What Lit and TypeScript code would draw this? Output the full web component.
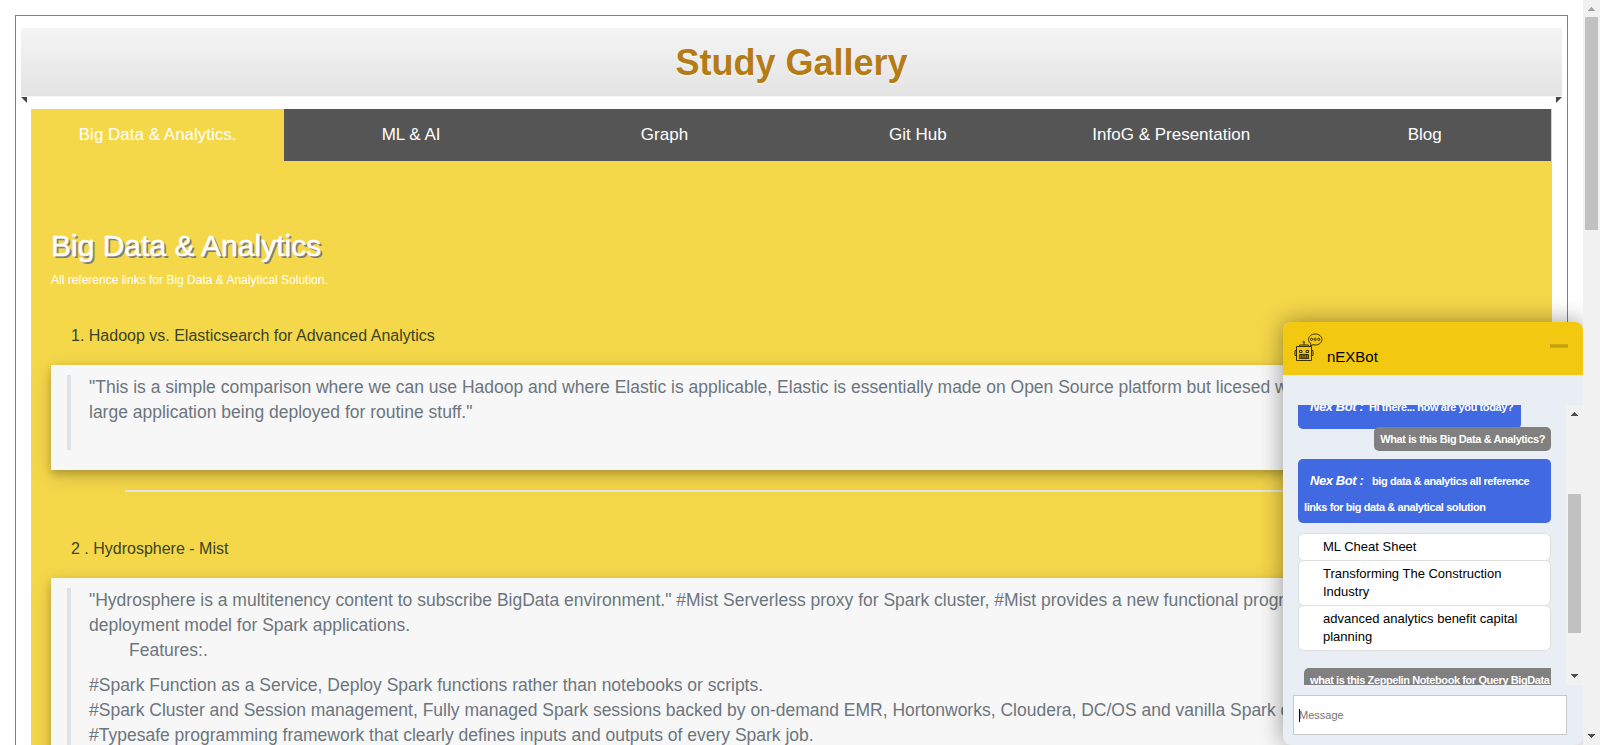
import { LitElement, html, css, svg } from "lit";
import { customElement, property } from "lit/decorators.js";
import { classMap } from "lit/directives/class-map.js";

@customElement("scroll-rail")
class ScrollRail extends LitElement {
  @property({ type: Number }) before = 0;
  @property({ type: Number }) thumb = 100;
  @property({ type: Boolean }) top = false;

  static styles = css`
    :host { display: flex; flex-direction: column; align-items: center; width: 17px; background: #f1f1f1; flex: none; }
    .arrow { height: 17px; width: 17px; display: block; flex: none; }
    .track { flex: 1; width: 13px; min-height: 0; }
    .thumb { background: #c1c1c1; }
  `;

  render() {
    return html`
      <svg class="arrow" viewBox="0 0 17 17" shape-rendering="crispEdges">
        <path d="M5 11h7l-3.5-4z" fill=${this.top ? "#a3a3a3" : "#505050"} />
      </svg>
      <div class="track">
        <div style="height:${this.before}px"></div>
        <div class="thumb" style="height:${this.thumb}px"></div>
      </div>
      <svg class="arrow" viewBox="0 0 17 17" shape-rendering="crispEdges">
        <path d="M5 6h7l-3.5 4z" fill="#505050" />
      </svg>
    `;
  }
}

@customElement("chat-box")
class ChatBox extends LitElement {
  static styles = css`
    :host { display: flex; flex-direction: column; width: 300px; height: 423px; box-sizing: border-box;
      background: #e9edf4; border-radius: 8px; box-shadow: 0 0 24px rgba(0,0,0,.4); overflow: hidden; color: #000; }
    .head { height: 53px; background: #f2c811; display: flex; flex: none; box-sizing: border-box; padding: 10px 15px 0 10px; }
    .robot { width: 32px; height: 32px; flex: none; }
    .name { font-size: 15px; line-height: 18px; margin: 16px 0 0 2px; flex: 1; }
    .min { width: 18px; height: 2px; background: #bf9e10; border: solid #d3ae11; border-width: 1px 0; margin-top: 12px; }
    .view { margin-top: 30px; height: 280px; display: flex; flex: none; overflow: hidden; }
    .log { flex: 1; min-width: 0; padding: 0 15px; display: flex; flex-direction: column; overflow: hidden; }
    .bot, .user { font-size: 11px; font-weight: bold; letter-spacing: -.41px; color: #fff; border-radius: 5px; box-sizing: border-box; flex: none; white-space: nowrap; }
    .bot { background: #4169e1; line-height: 26px; padding: 9px 6px 3px; }
    .bot i { font-size: 13px; margin: 0 6px 0 6px; }
    .first { width: 223px; height: 36px; margin-top: -12px; padding-top: 1px; }
    .first i { margin-right: 3px; }
    .user { background: #808080; align-self: flex-end; line-height: 24px; height: 24px; padding: 0 6px; margin-top: -2px; position: relative; }
    .answer { margin-top: 8px; height: 64px; }
    .links { margin: 10px 0 0; padding: 0; list-style: none; flex: none; }
    .links li { font-size: 13px; line-height: 18px; background: #fff; border: 1px solid #dfdfdf; border-radius: 6px; padding: 4px 24px 4px; margin-bottom: -1px; }
    .next { margin-top: 18px; width: 247px; overflow: hidden; border-radius: 5px 0 0 0; }
    .field { margin: 10px 16px 0 10px; height: 40px; box-sizing: border-box; border: 1px solid #c8c8c8; background: #fff;
      display: flex; align-items: center; font-size: 11px; color: #757575; padding-left: 5px; }
    .caret { width: 1px; height: 13px; background: #000; margin-right: -1px; }
  `;

  render() {
    return html`
      <div class="head">
        <svg class="robot" viewBox="0 0 32 32" fill="none" stroke="#3b3006" stroke-width="1">
          ${svg`
          <path d="M3.500 14.500h15v14h-15z M6.500 14.500v-1.500h9v1.500 M11 13v-3 M9.500 10.200l1.200-1 1.200 1 M3.500 18.500h-1.500v5h1.500 M18.500 18.500h1.500v5h-1.500" />
          <path d="M6.500 18.500h2.500v2h-2.500z M13 18.500h2.500v2h-2.500z" />
          <path d="M6.500 22.500h9v4h-9z" fill="#8f7710" />
          <path d="M8.500 22.500v4 M11 22.500v4 M13.500 22.500v4" stroke-width=".8" />
          <path d="M18 11.700l-.5 2.300 2.500-1.300c.8.2 1.400.3 2.200.3 3.800 0 6.700-2.400 6.700-5.500s-2.900-5.500-6.700-5.500-6.700 2.400-6.700 5.500c0 1.700 1 3.200 2.500 4.200z" />
          <circle cx="18.500" cy="7.300" r="1.100" /><circle cx="22.100" cy="7.300" r="1.100" /><circle cx="25.700" cy="7.300" r="1.100" />`}
        </svg>
        <div class="name">nEXBot</div>
        <div class="min"></div>
      </div>
      <div class="view">
        <div class="log">
          <div class="bot first"><i>Nex Bot :</i> Hi there... how are you today?</div>
          <div class="user">What is this Big Data &amp; Analytics?</div>
          <div class="bot answer"><i>Nex Bot :</i> big data &amp; analytics all reference<br />links for big data &amp; analytical solution</div>
          <ul class="links">
            <li>ML Cheat Sheet</li>
            <li>Transforming The Construction Industry</li>
            <li>advanced analytics benefit capital planning</li>
          </ul>
          <div class="user next">what is this Zeppelin Notebook for Query BigData</div>
        </div>
        <scroll-rail .before=${72} .thumb=${139}></scroll-rail>
      </div>
      <div class="field"><span class="caret"></span><span>Message</span></div>
    `;
  }
}

const TABS = ["Big Data & Analytics.", "ML & AI", "Graph", "Git Hub", "InfoG & Presentation", "Blog"];

@customElement("app-root")
class AppRoot extends LitElement {
  static styles = css`
    :host { display: flex; position: relative; width: 1600px; height: 745px; overflow: hidden; background: #fff;
      font-family: "Liberation Sans", Arial, sans-serif; }
    .page { flex: 1; min-width: 0; padding: 15px 15px 0; overflow: hidden; box-sizing: border-box; }
    .frame { border: 1px solid #808080; padding: 12px 5px 0; height: 900px; }
    .banner { height: 68px; background: linear-gradient(#f5f5f5, #e3e3e3); border-bottom: 1px solid #f7f7f7; display: flex; justify-content: center;
      font-size: 36px; font-weight: bold; line-height: 69px; color: #b57b15; text-shadow: 0 1px 0 #fff; }
    .folds { display: flex; justify-content: space-between; height: 12px; }
    .folds svg { width: 6px; height: 6px; display: block; }
    .content { margin: 0 10px; background: #f5d74a; height: 900px; }
    .tabs { display: flex; height: 52px; }
    .tab { width: 16.66%; background: #555; color: #fff; font-size: 17px; line-height: 52px; text-align: center; }
    .on { background: #f5d74a; }
    .body { padding: 67px 20px 0; }
    h2 { margin: 0; font-size: 30px; font-weight: 400; line-height: 36px; color: #fff; text-shadow: 2px 2px #808080; white-space: nowrap; -webkit-text-stroke: .5px #fff; }
    .sub { font-size: 12px; line-height: 18px; color: #fff; margin-top: 7px; }
    .item { font-size: 16px; line-height: 24px; color: #3a4423; margin: 35px 0 0 20px; white-space: pre; }
    .card { background: #f7f7f7; margin-top: 17px; padding: 10px 16px 20px; box-shadow: 0 4px 8px rgba(0,0,0,.2), 0 6px 20px rgba(0,0,0,.15); }
    .quote { border-left: 4px solid #dde2e6; padding-left: 18px; font-size: 17.5px; line-height: 25px; color: #6c757d; white-space: nowrap; }
    .one { height: 75px; }
    .two { height: 220px; }
    .indent { padding-left: 40px; margin-bottom: 10px; }
    .rule { height: 2px; background: #e4e4e4; margin: 20px 74px 0; }
    .second { margin-top: 45px; }
    .chat { position: absolute; right: 17px; bottom: 0; }
    .rail { position: relative; z-index: 2; }
  `;

  render() {
    return html`
      <main class="page">
        <div class="frame">
          <header class="banner">Study Gallery</header>
          <div class="folds">
            <svg viewBox="0 0 6 6"><path d="M0 0h6v6z" fill="#444" /></svg>
            <svg viewBox="0 0 6 6"><path d="M0 0h6l-6 6z" fill="#444" /></svg>
          </div>
          <div class="content">
            <nav class="tabs">
              ${TABS.map((t, i) => html`<div class=${classMap({ tab: true, on: i === 0 })}>${t}</div>`)}
            </nav>
            <section class="body">
              <h2>Big Data &amp; Analytics</h2>
              <div class="sub">All reference links for Big Data &amp; Analytical Solution.</div>
              <div class="item">1. Hadoop vs. Elasticsearch for Advanced Analytics</div>
              <div class="card">
                <div class="quote one">"This is a simple comparison where we can use Hadoop and where Elastic is applicable, Elastic is essentially made on Open Source platform but licesed with<br />large application being deployed for routine stuff."</div>
              </div>
              <div class="rule"></div>
              <div class="item second">2 . Hydrosphere - Mist</div>
              <div class="card">
                <div class="quote two">
                  <div>"Hydrosphere is a multitenency content to subscribe BigData environment." #Mist Serverless proxy for Spark cluster, #Mist provides a new functional programming</div>
                  <div>deployment model for Spark applications.</div>
                  <div class="indent">Features:.</div>
                  <div>#Spark Function as a Service, Deploy Spark functions rather than notebooks or scripts.</div>
                  <div>#Spark Cluster and Session management, Fully managed Spark sessions backed by on-demand EMR, Hortonworks, Cloudera, DC/OS and vanilla Spark clusters.</div>
                  <div>#Typesafe programming framework that clearly defines inputs and outputs of every Spark job.</div>
                </div>
              </div>
            </section>
          </div>
        </div>
      </main>
      <chat-box class="chat"></chat-box>
      <scroll-rail class="rail" .top=${true} .before=${0} .thumb=${213}></scroll-rail>
    `;
  }
}
